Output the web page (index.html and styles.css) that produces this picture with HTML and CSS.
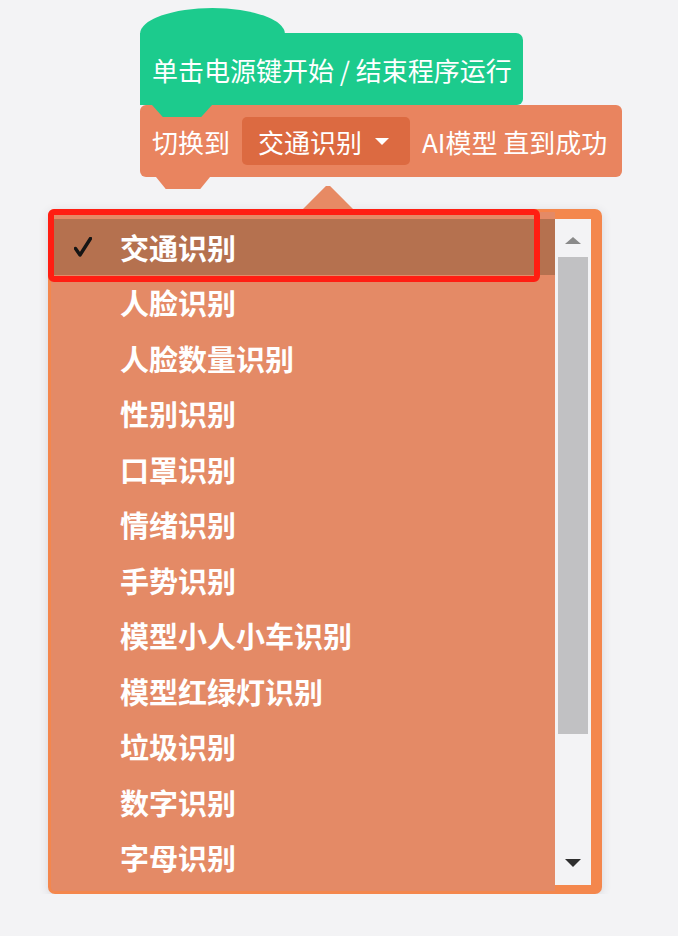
FILE: index.html
```html
<!DOCTYPE html>
<html lang="zh-CN">
  <head>
    <meta charset="UTF-8" />
    <meta name="viewport" content="width=device-width, initial-scale=1.0" />
    <title>切换 AI 模型</title>
    <link rel="stylesheet" href="styles.css">
  </head>
  <body>
    <div class="script">
      <div class="hat-cap"></div>
      <div class="block hat">单击电源键开始 / 结束程序运行</div>
      <div class="block command">
        <span>切换到</span>
        <span class="field">交通识别 <i class="caret"></i></span>
        <span>AI模型 直到成功</span>
      </div>
    </div>

    <div class="dropdown">
      <ul class="menu">
        <li class="item selected">
          <span class="check">
            <svg width="18" height="20" viewBox="0 0 18 20">
              <path d="M1.5 11.5 L6 18 L16.5 1.5" fill="none" stroke="#151515" stroke-width="3.4" stroke-linecap="round" stroke-linejoin="round" />
            </svg>
          </span>
          交通识别
        </li>
        <li class="item"><span class="check"></span>人脸识别</li>
        <li class="item"><span class="check"></span>人脸数量识别</li>
        <li class="item"><span class="check"></span>性别识别</li>
        <li class="item"><span class="check"></span>口罩识别</li>
        <li class="item"><span class="check"></span>情绪识别</li>
        <li class="item"><span class="check"></span>手势识别</li>
        <li class="item"><span class="check"></span>模型小人小车识别</li>
        <li class="item"><span class="check"></span>模型红绿灯识别</li>
        <li class="item"><span class="check"></span>垃圾识别</li>
        <li class="item"><span class="check"></span>数字识别</li>
        <li class="item"><span class="check"></span>字母识别</li>
      </ul>
      <div class="scrollbar">
        <span class="arrow up"></span>
        <span class="thumb"></span>
        <span class="arrow down"></span>
      </div>
    </div>
  </body>
</html>
```

FILE: styles.css
```css
body {
  background-color: #f3f3f5;
  font-family: "Noto Sans CJK SC", "Noto Sans", sans-serif;
  margin: 0;
  padding: 0;
}

.script {
  display: flex;
  flex-direction: column;
  align-items: flex-start;
  padding: 8px 0 0 140px;
}

.hat-cap {
  width: 145px;
  height: 26px;
  background-color: #1ccb8d;
  border-radius: 50% 50% 0 0 / 100% 100% 0 0;
}

.block {
  position: relative;
  display: flex;
  align-items: center;
  height: 72px;
  padding: 0 12px;
  color: #ffffff;
  font-size: 26px;
  white-space: nowrap;
}

.block::after {
  content: "";
  position: absolute;
  bottom: -12px;
  width: 54px;
  height: 12px;
  clip-path: polygon(0 0, 100% 0, 82% 100%, 18% 100%);
}

.hat {
  z-index: 2;
  width: 359px;
  margin-top: -1px;
  background-color: #1ccb8d;
  border-radius: 0 7px 6px 0;
}

.hat::after {
  left: 12px;
  width: 60px;
  background-color: #1ccb8d;
}

.command {
  z-index: 1;
  gap: 12px;
  width: 458px;
  background-color: #e9845f;
  border-radius: 6px;
}

.command::after {
  left: 16px;
  width: 54px;
  background-color: #e9845f;
}

.field {
  display: flex;
  align-items: center;
  gap: 13px;
  height: 48px;
  padding: 0 21px 0 16px;
  background-color: #dc6a41;
  border-radius: 5px;
}

.caret {
  width: 0;
  height: 0;
  border-left: 7px solid transparent;
  border-right: 7px solid transparent;
  border-top: 7px solid #ffffff;
}

.dropdown {
  position: relative;
  display: flex;
  width: 548px;
  height: 679px;
  margin: 32px 0 0 48px;
  background-color: #f4874d;
  border: 3px solid #f4874d;
  border-radius: 7px;
  box-shadow: 0 2px 10px rgba(60, 60, 80, 0.15);
}

.dropdown::before {
  content: "";
  position: absolute;
  top: -27px;
  left: 251px;
  width: 52px;
  height: 25px;
  background-color: #e78a64;
  clip-path: polygon(0 100%, 46% 4%, 54% 4%, 100% 100%);
}

.menu {
  flex: 1;
  list-style: none;
  margin: 0;
  padding: 7px 0 0;
  background-color: #e48a66;
  border-radius: 4px 0 0 4px;
}

.item {
  position: relative;
  display: flex;
  align-items: center;
  height: 55.5px;
  color: #ffffff;
  font-size: 29px;
  font-weight: bold;
  white-space: nowrap;
}

.check {
  display: flex;
  width: 69px;
  padding-left: 23px;
  box-sizing: border-box;
}

.selected {
  background-color: #b5714f;
}

.selected::after {
  content: "";
  position: absolute;
  top: -10px;
  left: -3px;
  right: 15px;
  bottom: -7px;
  border: 6px solid #ff1e12;
  border-radius: 6px;
}

.scrollbar {
  display: flex;
  flex-direction: column;
  align-items: center;
  width: 36px;
  margin: 7px 8px 6px 0;
  background-color: #f3f3f5;
}

.arrow {
  width: 0;
  height: 0;
  border-left: 8px solid transparent;
  border-right: 8px solid transparent;
}

.arrow.up {
  margin-top: 18px;
  border-bottom: 7px solid #8a8a8a;
}

.thumb {
  width: 30px;
  height: 477px;
  margin-top: 13px;
  background-color: #c1c1c3;
}

.arrow.down {
  margin-top: auto;
  margin-bottom: 18px;
  border-top: 8px solid #2e2e2e;
}
```
